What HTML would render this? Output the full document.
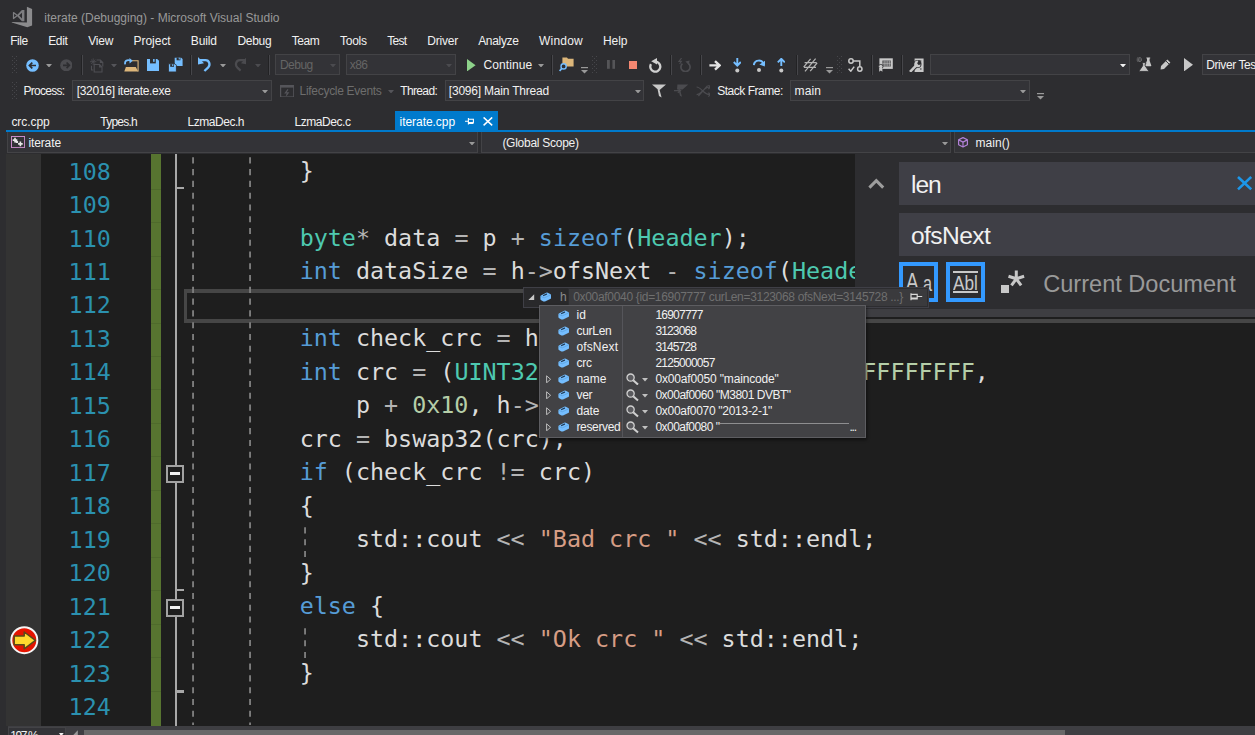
<!DOCTYPE html>
<html lang="en"><head><meta charset="utf-8"><title>iterate (Debugging) - Microsoft Visual Studio</title>
<style>
html,body{margin:0;padding:0;}
body{width:1255px;height:735px;overflow:hidden;background:#2d2d30;position:relative;font-family:"Liberation Sans", sans-serif;}
.b{position:absolute;display:block;}
.t{position:absolute;white-space:pre;line-height:1;font-family:"Liberation Sans", sans-serif;}
.c{position:absolute;white-space:pre;font-family:"DejaVu Sans Mono", "Liberation Mono", monospace;}
.kw{color:#569cd6}.ty{color:#4ec9b0}.st{color:#d69d85}.nu{color:#b5cea8}.op{color:#b4b4b4}
</style></head>
<body>
<svg class="b" style="left:11px;top:6px;" width="22" height="22" viewBox="0 0 22 22"><path fill="#8b8b8d" d="M15.9 0.8 L21.1 3.1 V19.4 L16.3 21.2 L0.8 16.5 V16.0 L15.9 16.4 Z"/><path fill="#7d7d80" fill-rule="evenodd" d="M13.4 4.0 V15.2 L10.9 15.2 L5.6 9.6 L10.9 4.0 Z M8.0 9.6 L11.0 12.4 V6.8 Z"/><path d="M2.5 6.6 V12.6 L6.4 9.6 Z" stroke="#7d7d80" stroke-width="1.2" fill="none" stroke-linejoin="round"/></svg>
<div class="t" style="left:44.3px;top:11.64px;font-size:12px;color:#999999;letter-spacing:-0.001px;">iterate (Debugging) - Microsoft Visual Studio</div>
<div class="t" style="left:10.3px;top:34.64px;font-size:12px;color:#f1f1f1;letter-spacing:-0.515px;">File</div>
<div class="t" style="left:48.2px;top:34.64px;font-size:12px;color:#f1f1f1;letter-spacing:-0.362px;">Edit</div>
<div class="t" style="left:88.2px;top:34.64px;font-size:12px;color:#f1f1f1;letter-spacing:-0.166px;">View</div>
<div class="t" style="left:133.5px;top:34.64px;font-size:12px;color:#f1f1f1;letter-spacing:-0.027px;">Project</div>
<div class="t" style="left:190.8px;top:34.64px;font-size:12px;color:#f1f1f1;letter-spacing:-0.147px;">Build</div>
<div class="t" style="left:237.5px;top:34.64px;font-size:12px;color:#f1f1f1;letter-spacing:-0.319px;">Debug</div>
<div class="t" style="left:291.8px;top:34.64px;font-size:12px;color:#f1f1f1;letter-spacing:-0.448px;">Team</div>
<div class="t" style="left:340.0px;top:34.64px;font-size:12px;color:#f1f1f1;letter-spacing:-0.254px;">Tools</div>
<div class="t" style="left:387.2px;top:34.64px;font-size:12px;color:#f1f1f1;letter-spacing:-0.739px;">Test</div>
<div class="t" style="left:427.2px;top:34.64px;font-size:12px;color:#f1f1f1;letter-spacing:-0.180px;">Driver</div>
<div class="t" style="left:478.2px;top:34.64px;font-size:12px;color:#f1f1f1;letter-spacing:-0.317px;">Analyze</div>
<div class="t" style="left:539.0px;top:34.64px;font-size:12px;color:#f1f1f1;letter-spacing:0.222px;">Window</div>
<div class="t" style="left:603.0px;top:34.64px;font-size:12px;color:#f1f1f1;letter-spacing:-0.062px;">Help</div>
<svg class="b" style="left:12px;top:56px;" width="5" height="17" viewBox="0 0 5 17"><rect x="0" y="0" width="1" height="1" fill="#46464a"/><rect x="4" y="0" width="1" height="1" fill="#46464a"/><rect x="2" y="2" width="1" height="1" fill="#46464a"/><rect x="0" y="4" width="1" height="1" fill="#46464a"/><rect x="4" y="4" width="1" height="1" fill="#46464a"/><rect x="2" y="6" width="1" height="1" fill="#46464a"/><rect x="0" y="8" width="1" height="1" fill="#46464a"/><rect x="4" y="8" width="1" height="1" fill="#46464a"/><rect x="2" y="10" width="1" height="1" fill="#46464a"/><rect x="0" y="12" width="1" height="1" fill="#46464a"/><rect x="4" y="12" width="1" height="1" fill="#46464a"/><rect x="2" y="14" width="1" height="1" fill="#46464a"/><rect x="0" y="16" width="1" height="1" fill="#46464a"/><rect x="4" y="16" width="1" height="1" fill="#46464a"/></svg>
<svg class="b" style="left:25.5px;top:58.5px;" width="13" height="13" viewBox="0 0 13 13"><circle cx="6.5" cy="6.5" r="6.3" fill="#75beff"/><path d="M10 6.5 H3.6 M6.3 3.6 L3.4 6.5 L6.3 9.4" stroke="#2d2d30" stroke-width="1.7" fill="none"/></svg>
<svg class="b" style="left:46.0px;top:63.8px;" width="6" height="3.5" viewBox="0 0 6 3.5"><path d="M0 0 H6 L3.0 3.5 Z" fill="#999999"/></svg>
<svg class="b" style="left:59.7px;top:58.8px;" width="12.6" height="12.6" viewBox="0 0 12.6 12.6"><circle cx="6.3" cy="6.3" r="6.1" fill="#4b4b4f"/><path d="M3 6.3 H9.2 M6.6 3.5 L9.4 6.3 L6.6 9.1" stroke="#2d2d30" stroke-width="1.7" fill="none"/></svg>
<div class="b" style="left:81px;top:55px;width:1px;height:20px;background:#222224;"></div>
<div class="b" style="left:82px;top:55px;width:1px;height:20px;background:#46464a;"></div>
<svg class="b" style="left:90px;top:57.5px;" width="13.6" height="15" viewBox="0 0 13.6 15"><path d="M3.2 0.4 V7 M0 3.7 H6.4 M1 1.5 L5.4 5.9 M5.4 1.5 L1 5.9" stroke="#4e4e53" stroke-width="0.8"/><path d="M6.6 2 H10.4 L12.8 4.4 V8.6 M10.4 2 V4.4 H12.8 M1.5 7.8 V12 H3.4" stroke="#4e4e53" stroke-width="1.1" fill="none"/><path d="M4.2 6.5 H9.6 L12 8.9 V14 H4.2 Z M9.6 6.5 V8.9 H12" stroke="#4e4e53" stroke-width="1.1" fill="#2d2d30"/></svg>
<svg class="b" style="left:110.8px;top:63.8px;" width="6" height="3.5" viewBox="0 0 6 3.5"><path d="M0 0 H6 L3.0 3.5 Z" fill="#55555a"/></svg>
<svg class="b" style="left:123.5px;top:57px;" width="15.2" height="15.2" viewBox="0 0 15.2 15.2"><path d="M7.6 3.8 H14.1 V14.4" stroke="#dcb67a" stroke-width="1.1" fill="none"/><path d="M1.9 10 H11.8 L14.3 14.6 H0.3 Z" fill="#dcb67a"/><path d="M1.2 7.4 C0.4 4.2 2.8 2.4 6.2 3.5" stroke="#75beff" stroke-width="1.8" fill="none"/><path d="M5.4 0.9 L8.8 3.7 L5.6 6.4 Z" fill="#75beff"/></svg>
<svg class="b" style="left:147px;top:59px;" width="12" height="12" viewBox="0 0 12 12"><path d="M0 0 H10.2 L12 1.8 V12 H0 Z" fill="#75beff"/><rect x="3" y="0" width="5.8" height="4.4" fill="#2d2d30"/><rect x="6.1" y="0" width="1.5" height="2.8" fill="#75beff"/></svg>
<svg class="b" style="left:167.6px;top:57px;" width="15" height="15.2" viewBox="0 0 15 15.2"><path d="M6.7 0.7 H13.2 L14.6 2.1 V9 H6.7 Z" fill="#75beff"/><rect x="8.6" y="0.7" width="3.8" height="2.6" fill="#2d2d30"/><rect x="10.7" y="0.7" width="1.1" height="1.8" fill="#75beff"/><path d="M0.4 6.8 H7 L8.4 8.2 V15 H0.4 Z" fill="#75beff" stroke="#2d2d30" stroke-width="0.9"/><rect x="2.2" y="7.2" width="3.8" height="2.6" fill="#2d2d30"/><rect x="4.2" y="7.2" width="1.1" height="1.8" fill="#75beff"/></svg>
<div class="b" style="left:190px;top:55px;width:1px;height:20px;background:#222224;"></div>
<div class="b" style="left:191px;top:55px;width:1px;height:20px;background:#46464a;"></div>
<svg class="b" style="left:198.3px;top:57.3px;" width="13.4" height="14.6" viewBox="0 0 13.4 14.6"><path d="M1.2 3.2 H7.4 C11.4 3.2 12.8 7.8 10 10.6 L6.4 14" stroke="#75beff" stroke-width="2.3" fill="none"/><path d="M0 0 V7.4 L6 6.2 Z" fill="#75beff"/></svg>
<svg class="b" style="left:220.0px;top:63.8px;" width="6" height="3.5" viewBox="0 0 6 3.5"><path d="M0 0 H6 L3.0 3.5 Z" fill="#999999"/></svg>
<svg class="b" style="left:233.6px;top:57.3px;" width="12.8" height="14.6" viewBox="0 0 12.8 14.6"><path d="M11.6 3.2 H6 C2 3.2 0.6 7.8 3.4 10.6 L6.6 13.6" stroke="#4b4b4f" stroke-width="2.2" fill="none"/><path d="M12.8 0 V7.4 L7 6.2 Z" fill="#4b4b4f"/></svg>
<svg class="b" style="left:255.2px;top:63.8px;" width="6" height="3.5" viewBox="0 0 6 3.5"><path d="M0 0 H6 L3.0 3.5 Z" fill="#4b4b4f"/></svg>
<div class="b" style="left:268px;top:55px;width:1px;height:20px;background:#222224;"></div>
<div class="b" style="left:269px;top:55px;width:1px;height:20px;background:#46464a;"></div>
<div class="b" style="left:275.3px;top:54.2px;width:64.6px;height:21.3px;background:#333337;border:1px solid #434346;box-sizing:border-box;"></div>
<div class="t" style="left:279.90000000000003px;top:58.99px;font-size:12px;color:#656565;letter-spacing:-0.494px;">Debug</div>
<svg class="b" style="left:330.09999999999997px;top:63.55000000000001px;" width="6" height="3.5" viewBox="0 0 6 3.5"><path d="M0 0 H6 L3.0 3.5 Z" fill="#4b4b4f"/></svg>
<div class="b" style="left:346px;top:54.2px;width:109.7px;height:21.3px;background:#333337;border:1px solid #434346;box-sizing:border-box;"></div>
<div class="t" style="left:349.8px;top:58.99px;font-size:12px;color:#656565;letter-spacing:-0.580px;">x86</div>
<svg class="b" style="left:445.9px;top:63.55000000000001px;" width="6" height="3.5" viewBox="0 0 6 3.5"><path d="M0 0 H6 L3.0 3.5 Z" fill="#4b4b4f"/></svg>
<svg class="b" style="left:467px;top:59px;" width="9" height="12.4" viewBox="0 0 9 12.4"><path d="M0 0 L8.6 6.2 L0 12.4 Z" fill="#8dd28a"/></svg>
<div class="t" style="left:483.6px;top:59.14px;font-size:12px;color:#f1f1f1;letter-spacing:0.079px;">Continue</div>
<svg class="b" style="left:538.0px;top:63.8px;" width="6" height="3.5" viewBox="0 0 6 3.5"><path d="M0 0 H6 L3.0 3.5 Z" fill="#999999"/></svg>
<div class="b" style="left:551px;top:55px;width:1px;height:20px;background:#222224;"></div>
<div class="b" style="left:552px;top:55px;width:1px;height:20px;background:#46464a;"></div>
<svg class="b" style="left:558.8px;top:57.4px;" width="15" height="14.6" viewBox="0 0 15 14.6"><path d="M3.4 0.6 H8 L9 1.8 H14.6 V9.4 H3.4 Z" fill="#dcb67a"/><circle cx="4.6" cy="9.4" r="2.6" fill="#2d2d30" stroke="#75beff" stroke-width="1.4"/><path d="M2.8 11.4 L0.6 14" stroke="#75beff" stroke-width="1.7"/></svg>
<svg class="b" style="left:580.8px;top:67.4px;" width="7" height="7" viewBox="0 0 7 7"><rect x="0" y="0" width="7" height="1.2" fill="#999"/><path d="M0 3 H7 L3.5 6.5 Z" fill="#999"/></svg>
<svg class="b" style="left:591.6px;top:56px;" width="5" height="17" viewBox="0 0 5 17"><rect x="0" y="0" width="1" height="1" fill="#46464a"/><rect x="4" y="0" width="1" height="1" fill="#46464a"/><rect x="2" y="2" width="1" height="1" fill="#46464a"/><rect x="0" y="4" width="1" height="1" fill="#46464a"/><rect x="4" y="4" width="1" height="1" fill="#46464a"/><rect x="2" y="6" width="1" height="1" fill="#46464a"/><rect x="0" y="8" width="1" height="1" fill="#46464a"/><rect x="4" y="8" width="1" height="1" fill="#46464a"/><rect x="2" y="10" width="1" height="1" fill="#46464a"/><rect x="0" y="12" width="1" height="1" fill="#46464a"/><rect x="4" y="12" width="1" height="1" fill="#46464a"/><rect x="2" y="14" width="1" height="1" fill="#46464a"/><rect x="0" y="16" width="1" height="1" fill="#46464a"/><rect x="4" y="16" width="1" height="1" fill="#46464a"/></svg>
<svg class="b" style="left:606.9px;top:60.1px;" width="8.4" height="8.8" viewBox="0 0 8.4 8.8"><rect x="0" y="0" width="2.8" height="8.8" fill="#555558"/><rect x="5.4" y="0" width="2.8" height="8.8" fill="#555558"/></svg>
<div class="b" style="left:628.9px;top:60.8px;width:8.3px;height:8.3px;background:#f48771;"></div>
<svg class="b" style="left:648.6px;top:57.6px;" width="13" height="15" viewBox="0 0 13 15"><path d="M1.97 6.1 A5 5 0 1 0 6.3 3.6" stroke="#d0d0d0" stroke-width="2.3" fill="none"/><path d="M2.2 3.2 L8 0 V6.4 Z" fill="#d0d0d0"/></svg>
<div class="b" style="left:670px;top:55px;width:1px;height:20px;background:#222224;"></div>
<div class="b" style="left:671px;top:55px;width:1px;height:20px;background:#46464a;"></div>
<svg class="b" style="left:677.8px;top:57.6px;" width="13.6" height="14.6" viewBox="0 0 13.6 14.6"><path d="M4.4 5.6 A4.6 4.6 0 1 0 10.6 5.6" stroke="#4b4b4f" stroke-width="1.7" fill="none"/><path d="M11.6 2.4 L7.4 3.4 L10.8 7 Z" fill="#4b4b4f"/><path d="M3.6 0 L1 3.4 H3.4 L1.6 6" stroke="#4b4b4f" stroke-width="1.1" fill="none"/></svg>
<div class="b" style="left:699.6px;top:55px;width:1px;height:20px;background:#222224;"></div>
<div class="b" style="left:700.6px;top:55px;width:1px;height:20px;background:#46464a;"></div>
<svg class="b" style="left:708.6px;top:59.6px;" width="12.2" height="11" viewBox="0 0 12.2 11"><path d="M0.4 5.4 H10 M6 1.2 L10.6 5.4 L6 9.6" stroke="#e4e4e4" stroke-width="2.4" fill="none"/></svg>
<svg class="b" style="left:732.6px;top:57.6px;" width="8.6" height="15" viewBox="0 0 8.6 15"><path d="M4.3 0 V7 M0.8 4 L4.3 7.6 L7.8 4" stroke="#75beff" stroke-width="1.9" fill="none"/><circle cx="4.3" cy="12.4" r="2" fill="#c8c8c8"/></svg>
<svg class="b" style="left:752.8px;top:58px;" width="12.6" height="14.6" viewBox="0 0 12.6 14.6"><path d="M0.8 7.2 C1.6 1.2 9.4 1.2 10.6 6.6" stroke="#75beff" stroke-width="2" fill="none"/><path d="M12.4 2.4 L11.8 8.4 L6.4 6.6 Z" fill="#75beff"/><circle cx="6" cy="12" r="2" fill="#c8c8c8"/></svg>
<svg class="b" style="left:776.6px;top:57.6px;" width="8.6" height="15" viewBox="0 0 8.6 15"><path d="M4.3 8 V1 M0.8 4.4 L4.3 0.8 L7.8 4.4" stroke="#75beff" stroke-width="1.9" fill="none"/><circle cx="4.3" cy="12.4" r="2" fill="#c8c8c8"/></svg>
<div class="b" style="left:796px;top:55px;width:1px;height:20px;background:#222224;"></div>
<div class="b" style="left:797px;top:55px;width:1px;height:20px;background:#46464a;"></div>
<svg class="b" style="left:802.8px;top:58px;" width="15" height="14" viewBox="0 0 15 14"><path d="M2 13.4 L12.6 0.6 M0.6 9.2 L7.6 0.8 M7.2 13.2 L14.2 4.8 M1.6 4.6 H13.6 M1 9.4 H13" stroke="#b4b4b4" stroke-width="1.2" fill="none"/></svg>
<svg class="b" style="left:825.6px;top:67.4px;" width="7" height="7" viewBox="0 0 7 7"><rect x="0" y="0" width="7" height="1.2" fill="#999"/><path d="M0 3 H7 L3.5 6.5 Z" fill="#999"/></svg>
<svg class="b" style="left:837px;top:56px;" width="5" height="17" viewBox="0 0 5 17"><rect x="0" y="0" width="1" height="1" fill="#46464a"/><rect x="4" y="0" width="1" height="1" fill="#46464a"/><rect x="2" y="2" width="1" height="1" fill="#46464a"/><rect x="0" y="4" width="1" height="1" fill="#46464a"/><rect x="4" y="4" width="1" height="1" fill="#46464a"/><rect x="2" y="6" width="1" height="1" fill="#46464a"/><rect x="0" y="8" width="1" height="1" fill="#46464a"/><rect x="4" y="8" width="1" height="1" fill="#46464a"/><rect x="2" y="10" width="1" height="1" fill="#46464a"/><rect x="0" y="12" width="1" height="1" fill="#46464a"/><rect x="4" y="12" width="1" height="1" fill="#46464a"/><rect x="2" y="14" width="1" height="1" fill="#46464a"/><rect x="0" y="16" width="1" height="1" fill="#46464a"/><rect x="4" y="16" width="1" height="1" fill="#46464a"/></svg>
<svg class="b" style="left:848.4px;top:57.8px;" width="14.8" height="14.6" viewBox="0 0 14.8 14.6"><circle cx="3" cy="3" r="2.2" stroke="#c8c8c8" stroke-width="1.5" fill="none"/><circle cx="11.8" cy="11" r="2.2" stroke="#c8c8c8" stroke-width="1.5" fill="none"/><path d="M5.2 3 H11.8 V8.8" stroke="#c8c8c8" stroke-width="1.5" fill="none"/><path d="M0.6 10.8 L2.8 13.2 L6.2 8.6" stroke="#c8c8c8" stroke-width="1.5" fill="none"/></svg>
<div class="b" style="left:871px;top:55px;width:1px;height:20px;background:#222224;"></div>
<div class="b" style="left:872px;top:55px;width:1px;height:20px;background:#46464a;"></div>
<svg class="b" style="left:878.4px;top:58.4px;" width="15.2" height="14" viewBox="0 0 15.2 14"><rect x="1.4" y="0.3" width="13.4" height="10.6" fill="#c8c8c8"/><rect x="4.4" y="2.6" width="8.4" height="5.8" fill="#2d2d30"/><path d="M4.4 4 H12.8 M4.4 5.5 H12.8 M4.4 7 H12.8 M6.2 2.6 V8.4 M8 2.6 V8.4 M9.8 2.6 V8.4 M11.6 2.6 V8.4" stroke="#c8c8c8" stroke-width="0.6"/><circle cx="2.8" cy="8.6" r="2.2" fill="#c8c8c8" stroke="#2d2d30" stroke-width="0.8"/><path d="M1.2 10 V13.8 L2.8 12.6 L4.4 13.8 V10 Z" fill="#c8c8c8"/></svg>
<div class="b" style="left:901px;top:55px;width:1px;height:20px;background:#222224;"></div>
<div class="b" style="left:902px;top:55px;width:1px;height:20px;background:#46464a;"></div>
<svg class="b" style="left:908.6px;top:57.6px;" width="15.2" height="14.8" viewBox="0 0 15.2 14.8"><rect x="5.6" y="0.5" width="9" height="13.8" fill="#c8c8c8"/><path d="M8 3 H12.4 M11 11 H12.6" stroke="#2d2d30" stroke-width="1"/><path d="M1 13.8 L7 7.6" stroke="#2d2d30" stroke-width="4.4"/><circle cx="8.6" cy="6" r="3.9" fill="#2d2d30"/><path d="M1 13.8 L7 7.6" stroke="#c8c8c8" stroke-width="2.6"/><path d="M9.4 2.8 A3.3 3.3 0 1 0 11.8 6.6 L9.6 7 L8.2 5.4 Z" fill="#c8c8c8"/></svg>
<div class="b" style="left:930.2px;top:54.2px;width:199.5px;height:21.3px;background:#333337;border:1px solid #434346;box-sizing:border-box;"></div>
<svg class="b" style="left:1119.9px;top:63.55000000000001px;" width="6" height="3.5" viewBox="0 0 6 3.5"><path d="M0 0 H6 L3.0 3.5 Z" fill="#f1f1f1"/></svg>
<svg class="b" style="left:1135.8px;top:57.4px;" width="16" height="15" viewBox="0 0 16 15"><path d="M10.4 0.4 H14.2 V1.5 H13.6 V3.8 L15.3 8.4 Q15.5 9.2 14.7 9.2 H9 Q8.2 9.2 8.5 8.4 L11 3.8 V1.5 H10.4 Z" fill="#c8c8c8"/><path d="M6 5.6 H9.8 V6.7 H9.2 V8.8 L12.4 13.5 Q12.8 14.4 11.8 14.4 H4 Q3 14.4 3.4 13.5 L6.6 8.8 V6.7 H6 Z" fill="#c8c8c8" stroke="#2d2d30" stroke-width="0.9"/><path d="M1.6 0.8 H5 M0.8 2 H5.8 M0.8 3.2 H5.8 M1.6 4.4 H5" stroke="#b0b0b0" stroke-width="0.7" stroke-dasharray="0.8 0.6"/></svg>
<svg class="b" style="left:1160.4px;top:59.4px;" width="11" height="11" viewBox="0 0 11 11"><path d="M7.4 0.6 L10.4 3.6 L4 10 L0.6 10.4 L1 7 Z" fill="#c8c8c8"/><path d="M6 2 L9 5" stroke="#2d2d30" stroke-width="0.9"/></svg>
<svg class="b" style="left:1184px;top:58px;" width="9.2" height="13.4" viewBox="0 0 9.2 13.4"><path d="M0 0 L9 6.7 L0 13.4 Z" fill="#c8c8c8"/></svg>
<div class="b" style="left:1202.2px;top:54.2px;width:60px;height:21.3px;background:#333337;border:1px solid #434346;box-sizing:border-box;"></div>
<div class="t" style="left:1206.3px;top:59.14px;font-size:12px;color:#f1f1f1;letter-spacing:-0.422px;">Driver Tes</div>
<svg class="b" style="left:12px;top:82px;" width="5" height="17" viewBox="0 0 5 17"><rect x="0" y="0" width="1" height="1" fill="#46464a"/><rect x="4" y="0" width="1" height="1" fill="#46464a"/><rect x="2" y="2" width="1" height="1" fill="#46464a"/><rect x="0" y="4" width="1" height="1" fill="#46464a"/><rect x="4" y="4" width="1" height="1" fill="#46464a"/><rect x="2" y="6" width="1" height="1" fill="#46464a"/><rect x="0" y="8" width="1" height="1" fill="#46464a"/><rect x="4" y="8" width="1" height="1" fill="#46464a"/><rect x="2" y="10" width="1" height="1" fill="#46464a"/><rect x="0" y="12" width="1" height="1" fill="#46464a"/><rect x="4" y="12" width="1" height="1" fill="#46464a"/><rect x="2" y="14" width="1" height="1" fill="#46464a"/><rect x="0" y="16" width="1" height="1" fill="#46464a"/><rect x="4" y="16" width="1" height="1" fill="#46464a"/></svg>
<div class="t" style="left:23.4px;top:84.64px;font-size:12px;color:#f1f1f1;letter-spacing:-0.698px;">Process:</div>
<div class="b" style="left:72.3px;top:80.2px;width:199.5px;height:21.3px;background:#333337;border:1px solid #434346;box-sizing:border-box;"></div>
<div class="t" style="left:76.7px;top:84.99px;font-size:12px;color:#f1f1f1;letter-spacing:-0.289px;">[32016] iterate.exe</div>
<svg class="b" style="left:262.0px;top:89.55000000000001px;" width="6" height="3.5" viewBox="0 0 6 3.5"><path d="M0 0 H6 L3.0 3.5 Z" fill="#999999"/></svg>
<svg class="b" style="left:280px;top:84.6px;" width="14.4" height="12.6" viewBox="0 0 14.4 12.6"><rect x="0.6" y="0.6" width="13.2" height="11.4" stroke="#55555a" stroke-width="1.2" fill="none"/><rect x="0.6" y="0.6" width="13.2" height="2" fill="#55555a"/><path d="M8 4.4 L5.4 7.8 H8.2 L6.2 10.6" stroke="#55555a" stroke-width="1.2" fill="none"/></svg>
<div class="t" style="left:299.6px;top:84.64px;font-size:12px;color:#6d6d6d;letter-spacing:-0.301px;">Lifecycle Events</div>
<svg class="b" style="left:388.0px;top:89.9px;" width="6" height="3.5" viewBox="0 0 6 3.5"><path d="M0 0 H6 L3.0 3.5 Z" fill="#55555a"/></svg>
<div class="t" style="left:400.2px;top:84.64px;font-size:12px;color:#f1f1f1;letter-spacing:-0.627px;">Thread:</div>
<div class="b" style="left:445.0px;top:80.2px;width:199.4px;height:21.3px;background:#333337;border:1px solid #434346;box-sizing:border-box;"></div>
<div class="t" style="left:448.8px;top:84.99px;font-size:12px;color:#f1f1f1;letter-spacing:-0.203px;">[3096] Main Thread</div>
<svg class="b" style="left:634.6px;top:89.55000000000001px;" width="6" height="3.5" viewBox="0 0 6 3.5"><path d="M0 0 H6 L3.0 3.5 Z" fill="#999999"/></svg>
<svg class="b" style="left:652px;top:84.2px;" width="14.4" height="13.8" viewBox="0 0 14.4 13.8"><path d="M0 0.4 H14.2 L7.6 6 L9.6 13.4 L7 12 L5.6 5.2 Z" fill="#c8c8c8"/></svg>
<svg class="b" style="left:673.6px;top:84.2px;" width="14.6" height="13.8" viewBox="0 0 14.6 13.8"><path d="M3.4 0.4 H14.4 L8.6 5.6 H3 Z M6.2 6.4 L8 12.8 L6 11.8 L4.8 7 Z" fill="#4b4b4f"/><path d="M0 6.6 H6.4 M3.8 4.4 L6.6 6.6 L3.8 8.8" stroke="#4b4b4f" stroke-width="1.2" fill="none"/></svg>
<svg class="b" style="left:695.6px;top:85.4px;" width="14.8" height="11.6" viewBox="0 0 14.8 11.6"><path d="M0.6 2 C5 2 8 9.6 13.6 9.6 M0.6 9.6 C5 9.6 8 2 13.6 2 M12.4 0 L14.4 2 L12.4 4 M12.4 7.6 L14.4 9.6 L12.4 11.6 M2.4 11 L11.6 0.6" stroke="#4b4b4f" stroke-width="1.2" fill="none"/></svg>
<div class="t" style="left:717.2px;top:84.64px;font-size:12px;color:#f1f1f1;letter-spacing:-0.469px;">Stack Frame:</div>
<div class="b" style="left:790px;top:80.2px;width:240px;height:21.3px;background:#333337;border:1px solid #434346;box-sizing:border-box;"></div>
<div class="t" style="left:794.6px;top:84.99px;font-size:12px;color:#f1f1f1;letter-spacing:0.128px;">main</div>
<svg class="b" style="left:1020.2px;top:89.55000000000001px;" width="6" height="3.5" viewBox="0 0 6 3.5"><path d="M0 0 H6 L3.0 3.5 Z" fill="#999999"/></svg>
<svg class="b" style="left:1036.8px;top:93.4px;" width="7" height="7" viewBox="0 0 7 7"><rect x="0" y="0" width="7" height="1.2" fill="#999"/><path d="M0 3 H7 L3.5 6.5 Z" fill="#999"/></svg>
<div class="b" style="left:6px;top:130px;width:1249px;height:2.4px;background:#007acc;"></div>
<div class="b" style="left:395px;top:111.2px;width:103px;height:19.5px;background:#007acc;"></div>
<div class="t" style="left:11.4px;top:116.04px;font-size:12px;color:#f1f1f1;letter-spacing:-0.065px;">crc.cpp</div>
<div class="t" style="left:100.3px;top:116.04px;font-size:12px;color:#f1f1f1;letter-spacing:-0.755px;">Types.h</div>
<div class="t" style="left:187.5px;top:116.04px;font-size:12px;color:#f1f1f1;letter-spacing:-0.463px;">LzmaDec.h</div>
<div class="t" style="left:294.5px;top:116.04px;font-size:12px;color:#f1f1f1;letter-spacing:-0.454px;">LzmaDec.c</div>
<div class="t" style="left:399.6px;top:116.04px;font-size:12px;color:#ffffff;letter-spacing:-0.055px;">iterate.cpp</div>
<svg class="b" style="left:465.4px;top:117.4px;" width="9" height="8.4" viewBox="0 0 9 8.4"><path d="M0 4.2 H3.4 M3.4 1 V7.4 M3.4 2.2 H8.4 V5.6 H3.4 M3.4 6.4 H8.4" stroke="#ffffff" stroke-width="1.1" fill="none"/></svg>
<svg class="b" style="left:482.8px;top:117.2px;" width="9.8" height="8.8" viewBox="0 0 9.8 8.8"><path d="M0.6 0.4 L9.2 8.4 M9.2 0.4 L0.6 8.4" stroke="#ffffff" stroke-width="1.5" fill="none"/></svg>
<div class="b" style="left:7px;top:132.4px;width:471px;height:20.2px;background:#333337;border:1px solid #434346;box-sizing:border-box;border-top:none;"></div>
<svg class="b" style="left:468.8px;top:141.9px;" width="6" height="3.5" viewBox="0 0 6 3.5"><path d="M0 0 H6 L3.0 3.5 Z" fill="#999999"/></svg>
<div class="b" style="left:481px;top:132.4px;width:470px;height:20.2px;background:#333337;border:1px solid #434346;box-sizing:border-box;border-top:none;"></div>
<svg class="b" style="left:941.8px;top:141.9px;" width="6" height="3.5" viewBox="0 0 6 3.5"><path d="M0 0 H6 L3.0 3.5 Z" fill="#999999"/></svg>
<div class="b" style="left:954.3px;top:132.4px;width:310px;height:20.2px;background:#333337;border:1px solid #434346;box-sizing:border-box;border-top:none;"></div>
<svg class="b" style="left:10.9px;top:135.9px;" width="14.2" height="12.2" viewBox="0 0 14.2 12.2"><rect x="0.5" y="0.5" width="13.1" height="11.1" stroke="#c98bc9" stroke-width="1" fill="none"/><path d="M1.7 3.3 H6.3 V4.9 H1.7 Z M3.2 1.8 H4.8 V6.4 H3.2 Z M7.1 7.1 H11.7 V8.7 H7.1 Z M8.6 5.6 H10.2 V10.2 H8.6 Z M4.8 4.9 H7.1 V7.1 H4.8 Z" fill="#e8e8e8"/></svg>
<div class="t" style="left:28.4px;top:136.74px;font-size:12px;color:#f1f1f1;letter-spacing:-0.110px;">iterate</div>
<div class="t" style="left:502.4px;top:136.74px;font-size:12px;color:#f1f1f1;letter-spacing:-0.265px;">(Global Scope)</div>
<svg class="b" style="left:957.8px;top:137.4px;" width="10" height="10.6" viewBox="0 0 10 10.6"><path d="M5 0.6 L9.4 2.8 V7.8 L5 10 L0.6 7.8 V2.8 Z M0.8 2.9 L5 5.1 L9.2 2.9 M5 5.1 V9.8" stroke="#b180d7" stroke-width="1.2" fill="none" stroke-linejoin="round"/></svg>
<div class="t" style="left:975.5px;top:136.74px;font-size:12px;color:#f1f1f1;letter-spacing:0.057px;">main()</div>
<div class="b" style="left:6px;top:153.6px;width:1249px;height:572.0px;background:#1e1e1e;"></div>
<div class="b" style="left:6px;top:153.6px;width:34.8px;height:572.0px;background:#333333;"></div>
<div class="b" style="left:151.2px;top:153.6px;width:10.2px;height:572.0px;background:#577430;"></div>
<div class="b" style="left:151.2px;top:188.5px;width:10.2px;height:1px;background:#4f6a2c;"></div>
<div class="b" style="left:151.2px;top:221.5px;width:10.2px;height:1px;background:#4f6a2c;"></div>
<div class="b" style="left:151.2px;top:255.5px;width:10.2px;height:1px;background:#4f6a2c;"></div>
<div class="b" style="left:151.2px;top:288.5px;width:10.2px;height:1px;background:#4f6a2c;"></div>
<div class="b" style="left:151.2px;top:322.5px;width:10.2px;height:1px;background:#4f6a2c;"></div>
<div class="b" style="left:151.2px;top:355.5px;width:10.2px;height:1px;background:#4f6a2c;"></div>
<div class="b" style="left:151.2px;top:388.5px;width:10.2px;height:1px;background:#4f6a2c;"></div>
<div class="b" style="left:151.2px;top:422.5px;width:10.2px;height:1px;background:#4f6a2c;"></div>
<div class="b" style="left:151.2px;top:455.5px;width:10.2px;height:1px;background:#4f6a2c;"></div>
<div class="b" style="left:151.2px;top:489.5px;width:10.2px;height:1px;background:#4f6a2c;"></div>
<div class="b" style="left:151.2px;top:522.5px;width:10.2px;height:1px;background:#4f6a2c;"></div>
<div class="b" style="left:151.2px;top:556.5px;width:10.2px;height:1px;background:#4f6a2c;"></div>
<div class="b" style="left:151.2px;top:589.5px;width:10.2px;height:1px;background:#4f6a2c;"></div>
<div class="b" style="left:151.2px;top:623.5px;width:10.2px;height:1px;background:#4f6a2c;"></div>
<div class="b" style="left:151.2px;top:656.5px;width:10.2px;height:1px;background:#4f6a2c;"></div>
<div class="b" style="left:151.2px;top:690.5px;width:10.2px;height:1px;background:#4f6a2c;"></div>
<div class="b" style="left:183.9px;top:288.9px;width:1100px;height:34.1px;border:4px solid #464646;box-sizing:border-box;border-left-width:3.2px;"></div>
<svg class="b" style="left:191.9px;top:153.6px;" width="2.4" height="572.0" viewBox="0 0 2.4 572.0"><path d="M1.2 0 V572.00" stroke="#7c7c7c" stroke-width="2.2" stroke-dasharray="6.1 5.720000000000001" stroke-dashoffset="-2.20"/></svg>
<svg class="b" style="left:248.8px;top:153.6px;" width="2.4" height="572.0" viewBox="0 0 2.4 572.0"><path d="M1.2 0 V572.00" stroke="#7c7c7c" stroke-width="2.2" stroke-dasharray="6.1 5.720000000000001" stroke-dashoffset="-2.20"/></svg>
<svg class="b" style="left:303.8px;top:526.3699999999999px;" width="2.4" height="32.47000000000003" viewBox="0 0 2.4 32.47000000000003"><path d="M1.2 0 V32.47" stroke="#7c7c7c" stroke-width="2.2" stroke-dasharray="6.1 5.720000000000001" stroke-dashoffset="-1.30"/></svg>
<svg class="b" style="left:303.8px;top:626.78px;" width="2.4" height="32.47000000000003" viewBox="0 0 2.4 32.47000000000003"><path d="M1.2 0 V32.47" stroke="#7c7c7c" stroke-width="2.2" stroke-dasharray="6.1 5.720000000000001" stroke-dashoffset="-1.30"/></svg>
<div class="b" style="left:175px;top:153.6px;width:2.1px;height:572.0px;background:#a8a8a8;"></div>
<div class="b" style="left:176px;top:186.8px;width:8.2px;height:2.5px;background:#a8a8a8;"></div>
<div class="b" style="left:176px;top:588.9099999999999px;width:8.2px;height:2.5px;background:#a8a8a8;"></div>
<div class="b" style="left:176px;top:690.12px;width:8.2px;height:2.5px;background:#a8a8a8;"></div>
<div class="b" style="left:165.8px;top:465.0px;width:18.2px;height:17.6px;background:#1e1e1e;border:2px solid #a2a2a2;box-sizing:border-box;"></div>
<div class="b" style="left:170.2px;top:472.2px;width:9.9px;height:3px;background:#f0f0f0;"></div>
<div class="b" style="left:165.8px;top:599.0px;width:18.2px;height:17.6px;background:#1e1e1e;border:2px solid #a2a2a2;box-sizing:border-box;"></div>
<div class="b" style="left:170.2px;top:606.2px;width:9.9px;height:3px;background:#f0f0f0;"></div>
<div class="c" style="left:68.60px;top:156.30px;line-height:33.47px;height:33.47px;font-size:23.370px;color:#2b91af;">108</div>
<div class="c" style="left:68.60px;top:189.30px;line-height:33.47px;height:33.47px;font-size:23.370px;color:#2b91af;">109</div>
<div class="c" style="left:68.60px;top:223.30px;line-height:33.47px;height:33.47px;font-size:23.370px;color:#2b91af;">110</div>
<div class="c" style="left:68.60px;top:256.30px;line-height:33.47px;height:33.47px;font-size:23.370px;color:#2b91af;">111</div>
<div class="c" style="left:68.60px;top:289.30px;line-height:33.47px;height:33.47px;font-size:23.370px;color:#2b91af;">112</div>
<div class="c" style="left:68.60px;top:323.30px;line-height:33.47px;height:33.47px;font-size:23.370px;color:#2b91af;">113</div>
<div class="c" style="left:68.60px;top:356.30px;line-height:33.47px;height:33.47px;font-size:23.370px;color:#2b91af;">114</div>
<div class="c" style="left:68.60px;top:390.30px;line-height:33.47px;height:33.47px;font-size:23.370px;color:#2b91af;">115</div>
<div class="c" style="left:68.60px;top:423.30px;line-height:33.47px;height:33.47px;font-size:23.370px;color:#2b91af;">116</div>
<div class="c" style="left:68.60px;top:457.30px;line-height:33.47px;height:33.47px;font-size:23.370px;color:#2b91af;">117</div>
<div class="c" style="left:68.60px;top:490.30px;line-height:33.47px;height:33.47px;font-size:23.370px;color:#2b91af;">118</div>
<div class="c" style="left:68.60px;top:524.30px;line-height:33.47px;height:33.47px;font-size:23.370px;color:#2b91af;">119</div>
<div class="c" style="left:68.60px;top:557.30px;line-height:33.47px;height:33.47px;font-size:23.370px;color:#2b91af;">120</div>
<div class="c" style="left:68.60px;top:591.30px;line-height:33.47px;height:33.47px;font-size:23.370px;color:#2b91af;">121</div>
<div class="c" style="left:68.60px;top:624.30px;line-height:33.47px;height:33.47px;font-size:23.370px;color:#2b91af;">122</div>
<div class="c" style="left:68.60px;top:658.30px;line-height:33.47px;height:33.47px;font-size:23.370px;color:#2b91af;">123</div>
<div class="c" style="left:68.60px;top:691.30px;line-height:33.47px;height:33.47px;font-size:23.370px;color:#2b91af;">124</div>
<div class="c" style="left:187.14px;top:155.30px;line-height:33.47px;height:33.47px;font-size:23.370px;color:#dcdcdc;">        }</div>
<div class="c" style="left:187.14px;top:222.30px;line-height:33.47px;height:33.47px;font-size:23.370px;color:#dcdcdc;">        <span class="ty">byte</span><span class="op">*</span> data <span class="op">=</span> p <span class="op">+</span> <span class="kw">sizeof</span>(<span class="ty">Header</span>);</div>
<div class="c" style="left:187.14px;top:255.30px;line-height:33.47px;height:33.47px;font-size:23.370px;color:#dcdcdc;">        <span class="kw">int</span> dataSize <span class="op">=</span> h<span class="op">-&gt;</span>ofsNext <span class="op">-</span> <span class="kw">sizeof</span>(<span class="ty">Header</span>);</div>
<div class="c" style="left:187.14px;top:322.30px;line-height:33.47px;height:33.47px;font-size:23.370px;color:#dcdcdc;">        <span class="kw">int</span> check_crc <span class="op">=</span> h<span class="op">-&gt;</span>crc;</div>
<div class="c" style="left:187.14px;top:356.30px;line-height:33.47px;height:33.47px;font-size:23.370px;color:#dcdcdc;">        <span class="kw">int</span> crc <span class="op">=</span> (<span class="ty">UINT32</span>)MG_Table_Driven_CRC(<span class="nu">0xFFFFFFFF</span>,</div>
<div class="c" style="left:187.14px;top:389.30px;line-height:33.47px;height:33.47px;font-size:23.370px;color:#dcdcdc;">            p <span class="op">+</span> <span class="nu">0x10</span>, h<span class="op">-&gt;</span>ofsNext <span class="op">-</span> <span class="nu">0x10</span>);</div>
<div class="c" style="left:187.14px;top:423.30px;line-height:33.47px;height:33.47px;font-size:23.370px;color:#dcdcdc;">        crc <span class="op">=</span> bswap32(crc);</div>
<div class="c" style="left:187.14px;top:456.30px;line-height:33.47px;height:33.47px;font-size:23.370px;color:#dcdcdc;">        <span class="kw">if</span> (check_crc <span class="op">!=</span> crc)</div>
<div class="c" style="left:187.14px;top:490.30px;line-height:33.47px;height:33.47px;font-size:23.370px;color:#dcdcdc;">        {</div>
<div class="c" style="left:187.14px;top:523.30px;line-height:33.47px;height:33.47px;font-size:23.370px;color:#dcdcdc;">            std::cout <span class="op">&lt;&lt;</span> <span class="st">"Bad crc "</span> <span class="op">&lt;&lt;</span> std::endl;</div>
<div class="c" style="left:187.14px;top:557.30px;line-height:33.47px;height:33.47px;font-size:23.370px;color:#dcdcdc;">        }</div>
<div class="c" style="left:187.14px;top:590.30px;line-height:33.47px;height:33.47px;font-size:23.370px;color:#dcdcdc;">        <span class="kw">else</span> {</div>
<div class="c" style="left:187.14px;top:623.30px;line-height:33.47px;height:33.47px;font-size:23.370px;color:#dcdcdc;">            std::cout <span class="op">&lt;&lt;</span> <span class="st">"Ok crc "</span> <span class="op">&lt;&lt;</span> std::endl;</div>
<div class="c" style="left:187.14px;top:657.30px;line-height:33.47px;height:33.47px;font-size:23.370px;color:#dcdcdc;">        }</div>
<svg class="b" style="left:9.6px;top:626.4px;" width="29" height="29" viewBox="0 0 29 29"><circle cx="14.3" cy="14.2" r="13" fill="#e51400" stroke="#f5f5f5" stroke-width="2"/><path d="M4.2 10 H14.2 V6 L25.4 14.4 L14.2 22.8 V18.8 H4.2 Z" fill="#ffd92e" stroke="#5a4a1a" stroke-width="1.5" stroke-linejoin="round"/></svg>
<div class="b" style="left:0px;top:725.6px;width:1255px;height:10px;background:#3e3e42;"></div>
<div class="b" style="left:0px;top:725.6px;width:7.6px;height:10px;background:#2d2d30;"></div>
<div class="b" style="left:7.6px;top:726.6px;width:58.2px;height:12px;background:#333337;border:1px solid #434346;box-sizing:border-box;"></div>
<div class="t" style="left:10.2px;top:730.44px;font-size:12px;color:#f1f1f1;letter-spacing:-1.408px;">197 %</div>
<svg class="b" style="left:59.300000000000004px;top:732.9px;" width="4.6" height="3.5" viewBox="0 0 4.6 3.5"><path d="M0 0 H4.6 L2.3 3.5 Z" fill="#f1f1f1"/></svg>
<svg class="b" style="left:73.2px;top:729.6px;" width="5" height="6" viewBox="0 0 5 6"><path d="M4.8 0.2 V6 H-0.6 Z" fill="#999"/></svg>
<div class="b" style="left:84.2px;top:729.8px;width:981px;height:6px;background:#686868;"></div>
<div class="b" style="left:855px;top:153.6px;width:400px;height:155.20000000000002px;background:#2d2d30;"></div>
<div class="b" style="left:855px;top:308.8px;width:400px;height:8.4px;background:#3e3e42;"></div>
<svg class="b" style="left:868px;top:178px;" width="16.6" height="11" viewBox="0 0 16.6 11"><path d="M1.4 9.6 L8.3 2.6 L15.2 9.6" stroke="#9d9d9d" stroke-width="3" fill="none"/></svg>
<div class="b" style="left:899px;top:161.8px;width:360px;height:43.4px;background:#3f3f46;"></div>
<div class="b" style="left:899px;top:213.2px;width:360px;height:42.6px;background:#3f3f46;"></div>
<div class="t" style="left:911.0px;top:173.18px;font-size:24.6px;color:#f1f1f1;letter-spacing:-1.014px;">len</div>
<div class="t" style="left:911.0px;top:223.98px;font-size:24.6px;color:#f1f1f1;letter-spacing:-0.598px;">ofsNext</div>
<svg class="b" style="left:1237px;top:176.4px;" width="15.2" height="14.4" viewBox="0 0 15.2 14.4"><path d="M1 1 L14.2 13.4 M14.2 1 L1 13.4" stroke="#1c97ea" stroke-width="2.6" fill="none"/></svg>
<div class="b" style="left:899.2px;top:262px;width:39px;height:39.8px;background:#2d2d30;border:4px solid #3399ff;box-sizing:border-box;"></div>
<div class="b" style="left:946.1px;top:262px;width:39px;height:39.8px;background:#2d2d30;border:4px solid #3399ff;box-sizing:border-box;"></div>
<div class="t" style="left:906.4px;top:270.08px;font-size:24px;color:#c8c8c8;transform:scaleX(0.78);transform-origin:0 0;">A</div>
<div class="t" style="left:922.8px;top:274.48px;font-size:21.4px;color:#c8c8c8;transform:scaleX(0.76);transform-origin:0 0;">a</div>
<div class="t" style="left:953.4px;top:273.07px;font-size:20px;color:#c8c8c8;transform:scaleX(0.86);transform-origin:0 0;">Abl</div>
<div class="b" style="left:953px;top:271px;width:25.2px;height:2px;background:#c8c8c8;"></div>
<div class="b" style="left:953px;top:291.1px;width:25.2px;height:2px;background:#c8c8c8;"></div>
<div class="b" style="left:1001px;top:285px;width:8.1px;height:8.1px;background:#c8c8c8;"></div>
<svg class="b" style="left:1008.4px;top:270.2px;" width="16.6" height="17.6" viewBox="0 0 16.6 17.6"><path d="M8.3 8.8 L8.30 0.60 M8.3 8.8 L0.50 6.27 M8.3 8.8 L16.10 6.27 M8.3 8.8 L3.48 15.43 M8.3 8.8 L13.12 15.43 " stroke="#c8c8c8" stroke-width="3" fill="none"/></svg>
<div class="t" style="left:1043.2px;top:272.82px;font-size:23.6px;color:#999999;letter-spacing:-0.011px;">Current Document</div>
<div class="b" style="left:523px;top:287.4px;width:405.6px;height:20.6px;background:#2d2d30;border:1px solid #3f3f46;box-sizing:border-box;"></div>
<div class="b" style="left:524px;top:288.4px;width:44px;height:18.6px;background:#29292b;"></div>
<div class="b" style="left:569px;top:289.2px;width:358px;height:16.8px;background:#3a3a3d;"></div>
<svg class="b" style="left:528.2px;top:293.6px;" width="6.4" height="6.4" viewBox="0 0 6.4 6.4"><path d="M6.2 0.2 V6.2 H0.2 Z" fill="#c8c8c8"/></svg>
<svg class="b" style="left:540.4px;top:292.2px;" width="11.4" height="10" viewBox="0 0 11.4 10"><path d="M0.9 3.4 L6.2 0.7 Q7 0.3 7.8 0.7 L10.2 1.9 Q11 2.3 11 3.2 V5.9 Q11 6.7 10.2 7.1 L5 9.5 Q4.2 9.8 3.4 9.4 L1.2 8.2 Q0.4 7.8 0.4 6.9 V4.4 Q0.4 3.7 0.9 3.4 Z" fill="#75beff"/><path d="M3.6 3.5 L6.6 2.1" stroke="#1f3b57" stroke-width="1.2" stroke-linecap="round"/><path d="M0.9 4.3 L4.1 5.9 L10.6 2.9" stroke="#5aa0dc" stroke-width="0.7" fill="none"/></svg>
<div class="t" style="left:560.0px;top:290.84px;font-size:12px;color:#8c8c8c;">h</div>
<div class="b" style="left:568px;top:289.2px;width:1px;height:16.6px;background:#2d2d30;"></div>
<div class="t" style="left:573.2px;top:290.84px;font-size:12px;color:#6f6f6f;letter-spacing:-0.318px;">0x00af0040 {id=16907777 curLen=3123068 ofsNext=3145728 ...}</div>
<svg class="b" style="left:910.4px;top:293px;" width="12.4" height="7.6" viewBox="0 0 12.4 7.6"><path d="M1 0.2 V7.2 M1 1.4 H7.2 V5.8 H1 M1 5.2 H7.2 M7.2 3.5 H12.2" stroke="#d8d8d8" stroke-width="1.2" fill="none"/></svg>
<div class="b" style="left:539.2px;top:305.0px;width:326.6px;height:133.4px;background:#424245;border:1px solid #5d5d61;box-sizing:border-box;box-shadow:1px 2px 3px rgba(0,0,0,0.45);"></div>
<div class="b" style="left:622.2px;top:306px;width:1px;height:131.4px;background:#55555a;"></div>
<svg class="b" style="left:557.6px;top:309.9px;" width="11.4" height="10" viewBox="0 0 11.4 10"><path d="M0.9 3.4 L6.2 0.7 Q7 0.3 7.8 0.7 L10.2 1.9 Q11 2.3 11 3.2 V5.9 Q11 6.7 10.2 7.1 L5 9.5 Q4.2 9.8 3.4 9.4 L1.2 8.2 Q0.4 7.8 0.4 6.9 V4.4 Q0.4 3.7 0.9 3.4 Z" fill="#75beff"/><path d="M3.6 3.5 L6.6 2.1" stroke="#1f3b57" stroke-width="1.2" stroke-linecap="round"/><path d="M0.9 4.3 L4.1 5.9 L10.6 2.9" stroke="#5aa0dc" stroke-width="0.7" fill="none"/></svg>
<div class="t" style="left:576.4px;top:308.74px;font-size:12px;color:#f1f1f1;letter-spacing:0.256px;">id</div>
<div class="t" style="left:655.4px;top:308.74px;font-size:12px;color:#f1f1f1;letter-spacing:-0.770px;">16907777</div>
<svg class="b" style="left:557.6px;top:325.95px;" width="11.4" height="10" viewBox="0 0 11.4 10"><path d="M0.9 3.4 L6.2 0.7 Q7 0.3 7.8 0.7 L10.2 1.9 Q11 2.3 11 3.2 V5.9 Q11 6.7 10.2 7.1 L5 9.5 Q4.2 9.8 3.4 9.4 L1.2 8.2 Q0.4 7.8 0.4 6.9 V4.4 Q0.4 3.7 0.9 3.4 Z" fill="#75beff"/><path d="M3.6 3.5 L6.6 2.1" stroke="#1f3b57" stroke-width="1.2" stroke-linecap="round"/><path d="M0.9 4.3 L4.1 5.9 L10.6 2.9" stroke="#5aa0dc" stroke-width="0.7" fill="none"/></svg>
<div class="t" style="left:576.4px;top:324.79px;font-size:12px;color:#f1f1f1;letter-spacing:-0.261px;">curLen</div>
<div class="t" style="left:655.4px;top:324.79px;font-size:12px;color:#f1f1f1;letter-spacing:-0.853px;">3123068</div>
<svg class="b" style="left:557.6px;top:342.0px;" width="11.4" height="10" viewBox="0 0 11.4 10"><path d="M0.9 3.4 L6.2 0.7 Q7 0.3 7.8 0.7 L10.2 1.9 Q11 2.3 11 3.2 V5.9 Q11 6.7 10.2 7.1 L5 9.5 Q4.2 9.8 3.4 9.4 L1.2 8.2 Q0.4 7.8 0.4 6.9 V4.4 Q0.4 3.7 0.9 3.4 Z" fill="#75beff"/><path d="M3.6 3.5 L6.6 2.1" stroke="#1f3b57" stroke-width="1.2" stroke-linecap="round"/><path d="M0.9 4.3 L4.1 5.9 L10.6 2.9" stroke="#5aa0dc" stroke-width="0.7" fill="none"/></svg>
<div class="t" style="left:576.4px;top:340.84px;font-size:12px;color:#f1f1f1;letter-spacing:0.152px;">ofsNext</div>
<div class="t" style="left:655.4px;top:340.84px;font-size:12px;color:#f1f1f1;letter-spacing:-0.853px;">3145728</div>
<svg class="b" style="left:557.6px;top:358.04999999999995px;" width="11.4" height="10" viewBox="0 0 11.4 10"><path d="M0.9 3.4 L6.2 0.7 Q7 0.3 7.8 0.7 L10.2 1.9 Q11 2.3 11 3.2 V5.9 Q11 6.7 10.2 7.1 L5 9.5 Q4.2 9.8 3.4 9.4 L1.2 8.2 Q0.4 7.8 0.4 6.9 V4.4 Q0.4 3.7 0.9 3.4 Z" fill="#75beff"/><path d="M3.6 3.5 L6.6 2.1" stroke="#1f3b57" stroke-width="1.2" stroke-linecap="round"/><path d="M0.9 4.3 L4.1 5.9 L10.6 2.9" stroke="#5aa0dc" stroke-width="0.7" fill="none"/></svg>
<div class="t" style="left:576.4px;top:356.89px;font-size:12px;color:#f1f1f1;letter-spacing:-0.200px;">crc</div>
<div class="t" style="left:655.4px;top:356.89px;font-size:12px;color:#f1f1f1;letter-spacing:-0.750px;">2125000057</div>
<svg class="b" style="left:557.6px;top:374.09999999999997px;" width="11.4" height="10" viewBox="0 0 11.4 10"><path d="M0.9 3.4 L6.2 0.7 Q7 0.3 7.8 0.7 L10.2 1.9 Q11 2.3 11 3.2 V5.9 Q11 6.7 10.2 7.1 L5 9.5 Q4.2 9.8 3.4 9.4 L1.2 8.2 Q0.4 7.8 0.4 6.9 V4.4 Q0.4 3.7 0.9 3.4 Z" fill="#75beff"/><path d="M3.6 3.5 L6.6 2.1" stroke="#1f3b57" stroke-width="1.2" stroke-linecap="round"/><path d="M0.9 4.3 L4.1 5.9 L10.6 2.9" stroke="#5aa0dc" stroke-width="0.7" fill="none"/></svg>
<div class="t" style="left:576.4px;top:372.94px;font-size:12px;color:#f1f1f1;letter-spacing:-0.010px;">name</div>
<div class="t" style="left:655.4px;top:372.94px;font-size:12px;color:#f1f1f1;letter-spacing:-0.160px;">0x00af0050 &quot;maincode&quot;</div>
<svg class="b" style="left:545.6px;top:374.7px;" width="5.4" height="8.6" viewBox="0 0 5.4 8.6"><path d="M0.6 0.8 L4.6 4.3 L0.6 7.8 Z" stroke="#c8c8c8" stroke-width="0.9" fill="none"/></svg>
<svg class="b" style="left:626px;top:373.09999999999997px;" width="13" height="12.4" viewBox="0 0 13 12.4"><circle cx="4.6" cy="4.6" r="3.6" stroke="#d0d0d0" stroke-width="1.3" fill="#5a5a5e"/><path d="M7.2 7.2 L12 11.6" stroke="#d0d0d0" stroke-width="2"/></svg>
<svg class="b" style="left:642.2px;top:377.99999999999994px;" width="6" height="3.5" viewBox="0 0 6 3.5"><path d="M0 0 H6 L3.0 3.5 Z" fill="#c0c0c0"/></svg>
<svg class="b" style="left:557.6px;top:390.15px;" width="11.4" height="10" viewBox="0 0 11.4 10"><path d="M0.9 3.4 L6.2 0.7 Q7 0.3 7.8 0.7 L10.2 1.9 Q11 2.3 11 3.2 V5.9 Q11 6.7 10.2 7.1 L5 9.5 Q4.2 9.8 3.4 9.4 L1.2 8.2 Q0.4 7.8 0.4 6.9 V4.4 Q0.4 3.7 0.9 3.4 Z" fill="#75beff"/><path d="M3.6 3.5 L6.6 2.1" stroke="#1f3b57" stroke-width="1.2" stroke-linecap="round"/><path d="M0.9 4.3 L4.1 5.9 L10.6 2.9" stroke="#5aa0dc" stroke-width="0.7" fill="none"/></svg>
<div class="t" style="left:576.4px;top:388.99px;font-size:12px;color:#f1f1f1;letter-spacing:-0.236px;">ver</div>
<div class="t" style="left:655.4px;top:388.99px;font-size:12px;color:#f1f1f1;letter-spacing:-0.500px;">0x00af0060 &quot;M3801 DVBT&quot;</div>
<svg class="b" style="left:545.6px;top:390.75px;" width="5.4" height="8.6" viewBox="0 0 5.4 8.6"><path d="M0.6 0.8 L4.6 4.3 L0.6 7.8 Z" stroke="#c8c8c8" stroke-width="0.9" fill="none"/></svg>
<svg class="b" style="left:626px;top:389.15px;" width="13" height="12.4" viewBox="0 0 13 12.4"><circle cx="4.6" cy="4.6" r="3.6" stroke="#d0d0d0" stroke-width="1.3" fill="#5a5a5e"/><path d="M7.2 7.2 L12 11.6" stroke="#d0d0d0" stroke-width="2"/></svg>
<svg class="b" style="left:642.2px;top:394.04999999999995px;" width="6" height="3.5" viewBox="0 0 6 3.5"><path d="M0 0 H6 L3.0 3.5 Z" fill="#c0c0c0"/></svg>
<svg class="b" style="left:557.6px;top:406.2px;" width="11.4" height="10" viewBox="0 0 11.4 10"><path d="M0.9 3.4 L6.2 0.7 Q7 0.3 7.8 0.7 L10.2 1.9 Q11 2.3 11 3.2 V5.9 Q11 6.7 10.2 7.1 L5 9.5 Q4.2 9.8 3.4 9.4 L1.2 8.2 Q0.4 7.8 0.4 6.9 V4.4 Q0.4 3.7 0.9 3.4 Z" fill="#75beff"/><path d="M3.6 3.5 L6.6 2.1" stroke="#1f3b57" stroke-width="1.2" stroke-linecap="round"/><path d="M0.9 4.3 L4.1 5.9 L10.6 2.9" stroke="#5aa0dc" stroke-width="0.7" fill="none"/></svg>
<div class="t" style="left:576.4px;top:405.04px;font-size:12px;color:#f1f1f1;letter-spacing:-0.120px;">date</div>
<div class="t" style="left:655.4px;top:405.04px;font-size:12px;color:#f1f1f1;letter-spacing:-0.281px;">0x00af0070 &quot;2013-2-1&quot;</div>
<svg class="b" style="left:545.6px;top:406.8px;" width="5.4" height="8.6" viewBox="0 0 5.4 8.6"><path d="M0.6 0.8 L4.6 4.3 L0.6 7.8 Z" stroke="#c8c8c8" stroke-width="0.9" fill="none"/></svg>
<svg class="b" style="left:626px;top:405.2px;" width="13" height="12.4" viewBox="0 0 13 12.4"><circle cx="4.6" cy="4.6" r="3.6" stroke="#d0d0d0" stroke-width="1.3" fill="#5a5a5e"/><path d="M7.2 7.2 L12 11.6" stroke="#d0d0d0" stroke-width="2"/></svg>
<svg class="b" style="left:642.2px;top:410.09999999999997px;" width="6" height="3.5" viewBox="0 0 6 3.5"><path d="M0 0 H6 L3.0 3.5 Z" fill="#c0c0c0"/></svg>
<svg class="b" style="left:557.6px;top:422.25px;" width="11.4" height="10" viewBox="0 0 11.4 10"><path d="M0.9 3.4 L6.2 0.7 Q7 0.3 7.8 0.7 L10.2 1.9 Q11 2.3 11 3.2 V5.9 Q11 6.7 10.2 7.1 L5 9.5 Q4.2 9.8 3.4 9.4 L1.2 8.2 Q0.4 7.8 0.4 6.9 V4.4 Q0.4 3.7 0.9 3.4 Z" fill="#75beff"/><path d="M3.6 3.5 L6.6 2.1" stroke="#1f3b57" stroke-width="1.2" stroke-linecap="round"/><path d="M0.9 4.3 L4.1 5.9 L10.6 2.9" stroke="#5aa0dc" stroke-width="0.7" fill="none"/></svg>
<div class="t" style="left:576.4px;top:421.09px;font-size:12px;color:#f1f1f1;letter-spacing:-0.327px;">reserved</div>
<div class="t" style="left:655.4px;top:421.09px;font-size:12px;color:#f1f1f1;letter-spacing:-0.521px;">0x00af0080 &quot;</div>
<svg class="b" style="left:545.6px;top:422.85px;" width="5.4" height="8.6" viewBox="0 0 5.4 8.6"><path d="M0.6 0.8 L4.6 4.3 L0.6 7.8 Z" stroke="#c8c8c8" stroke-width="0.9" fill="none"/></svg>
<svg class="b" style="left:626px;top:421.25px;" width="13" height="12.4" viewBox="0 0 13 12.4"><circle cx="4.6" cy="4.6" r="3.6" stroke="#d0d0d0" stroke-width="1.3" fill="#5a5a5e"/><path d="M7.2 7.2 L12 11.6" stroke="#d0d0d0" stroke-width="2"/></svg>
<svg class="b" style="left:642.2px;top:426.15px;" width="6" height="3.5" viewBox="0 0 6 3.5"><path d="M0 0 H6 L3.0 3.5 Z" fill="#c0c0c0"/></svg>
<div class="b" style="left:720.4px;top:422.9px;width:128.6px;height:1px;background:#8e8e90;"></div>
<div class="t" style="left:849.4px;top:421.04px;font-size:12px;color:#f1f1f1;letter-spacing:-1.208px;">...</div>
</body></html>
